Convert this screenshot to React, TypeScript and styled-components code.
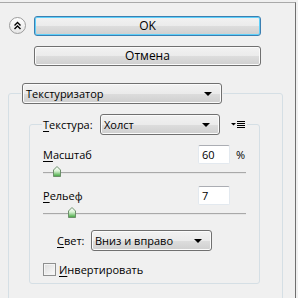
import React from 'react';
import styled, { createGlobalStyle } from 'styled-components';

const Global = createGlobalStyle`
  html, body { margin: 0; padding: 0; background: #f0f0f0; }
  body { font-family: "Open Sans", "Noto Sans", sans-serif; font-size: 11px; color: #000; }
  #root { width: 298px; height: 298px; overflow: hidden; }
`;

const Frame = styled.div`
  box-sizing: border-box;
  width: 296px;
  height: 310px;
  margin-top: 2px;
  border-top: 1px solid #a9a9a9;
  border-right: 1px solid #6f6f6f;
  padding-top: 13px;
`;

const TopRow = styled.div`
  display: flex;
  align-items: flex-start;
  gap: 8px;
  padding-left: 9px;
`;

const Collapse = styled.div`
  box-sizing: border-box;
  width: 17px;
  height: 17px;
  margin-top: 1px;
  border-radius: 50%;
  border: 1px solid #9c9c9c;
  background: linear-gradient(#ffffff, #e6e6e6);
  display: flex;
  align-items: center;
  justify-content: center;
`;

const ButtonStack = styled.div`
  display: flex;
  flex-direction: column;
  gap: 10px;
  width: 227px;
`;

const Button = styled.div<{ $default?: boolean }>`
  box-sizing: border-box;
  height: 20px;
  border-radius: 3px;
  border: 1px solid ${p => (p.$default ? '#3c7fb1' : '#707070')};
  box-shadow: ${p => (p.$default ? 'inset 0 0 0 1px #5fd0fa' : 'inset 0 0 0 1px #fbfbfb')};
  background: linear-gradient(#f2f2f2 0%, #ebebeb 50%, #dddddd 51%, #cfcfcf 100%);
  display: flex;
  align-items: center;
  justify-content: center;
  font-size: 12px;
  line-height: 1;
`;

const Group = styled.fieldset<{ $pl: number }>`
  box-sizing: border-box;
  margin: 0;
  border: 1px solid #d5dfe5;
  border-radius: 3px;
  padding: 0 0 0 ${p => p.$pl}px;
  min-width: 0;
`;

const OuterGroup = styled(Group)`
  width: 275px;
  margin: 17px 0 0 8px;
  height: 260px;
`;

const InnerGroup = styled(Group)`
  width: 231px;
  margin: 10px 0 0 8px;
  padding-bottom: 7px;
`;

const Legend = styled.legend`
  padding: 0 1px;
  display: flex;
  align-items: center;
`;

const Select = styled.div<{ $w: number }>`
  box-sizing: border-box;
  width: ${p => p.$w}px;
  height: 21px;
  border: 1px solid #707070;
  border-radius: 3px;
  box-shadow: inset 0 0 0 1px #fbfbfb;
  background: linear-gradient(#f2f2f2 0%, #ebebeb 50%, #dddddd 51%, #cfcfcf 100%);
  display: flex;
  align-items: center;
  justify-content: space-between;
  padding: 0 9px 0 3px;
`;

const Caret = styled.span`
  width: 0;
  height: 0;
  border-left: 4px solid transparent;
  border-right: 4px solid transparent;
  border-top: 4px solid #000;
`;

const Mn = styled.span`
  text-decoration: underline;
  text-underline-offset: 2px;
`;

const FieldLabel = styled.span<{ $w: number }>`
  width: ${p => p.$w}px;
  flex: none;
`;

const MenuIcon = styled.svg`
  margin: 0 1px 0 11px;
  display: block;
`;

const Body = styled.div`
  padding-left: 1px;
  width: 203px;
`;

const ValueRow = styled.div<{ $mt: number }>`
  display: flex;
  align-items: center;
  height: 19px;
  margin-top: ${p => p.$mt}px;
`;

const RowLabel = styled.span`
  flex: 1;
`;

const Input = styled.div`
  box-sizing: border-box;
  width: 32px;
  height: 19px;
  background: #fff;
  border: 1px solid #e3e9ef;
  border-top-color: #abadb3;
  border-radius: 2px;
  padding-left: 3px;
  display: flex;
  align-items: center;
`;

const Suffix = styled.span`
  width: 16px;
  padding-left: 6px;
  box-sizing: border-box;
`;

const Slider = styled.div`
  position: relative;
  height: 11px;
  margin-top: 2px;
`;

const Track = styled.div`
  position: absolute;
  left: 0;
  right: 0;
  top: 6px;
  height: 1px;
  background: #a9a9a9;
  border-bottom: 1px solid #e6e6e6;
`;

const Thumb = styled.svg`
  position: absolute;
  top: 0;
`;

const LightRow = styled.div`
  display: flex;
  align-items: center;
  margin: 12px 0 0 14px;
`;

const CheckRow = styled.div`
  display: flex;
  align-items: center;
  gap: 3px;
  margin-top: 12px;
  height: 13px;
`;

const Check = styled.div`
  box-sizing: border-box;
  width: 13px;
  height: 13px;
  border: 1px solid #8e8f8f;
  background: linear-gradient(135deg, #dcdcdc, #fbfbfb);
  box-shadow: inset 0 0 0 1px #f4f4f4;
`;

const SliderThumb = ({ x }: { x: number }) => (
  <Thumb width="8" height="11" viewBox="0 0 8 11" style={{ left: x }}>
    <defs>
      <linearGradient id="tg" x1="0" y1="0" x2="0" y2="1">
        <stop offset="0" stopColor="#ffffff" />
        <stop offset="0.45" stopColor="#d9f2d4" />
        <stop offset="1" stopColor="#3da53a" />
      </linearGradient>
    </defs>
    <path d="M4 0.5 L7.5 4 L7.5 10.5 L0.5 10.5 L0.5 4 Z" fill="url(#tg)" stroke="#6d8f6b" strokeWidth="1" />
  </Thumb>
);

export default function App() {
  return (
    <>
      <Global />
      <Frame>
        <TopRow>
          <Collapse>
            <svg width="9" height="9" viewBox="0 0 9 9">
              <path d="M1.5 4.5 L4.5 1.5 L7.5 4.5 M1.5 8 L4.5 5 L7.5 8" fill="none" stroke="#000" strokeWidth="1.4" />
            </svg>
          </Collapse>
          <ButtonStack>
            <Button $default>OK</Button>
            <Button>Отмена</Button>
          </ButtonStack>
        </TopRow>
        <OuterGroup $pl={12}>
          <Legend>
            <Select $w={200}>
              <span>Текстуризатор</span>
              <Caret />
            </Select>
          </Legend>
          <InnerGroup $pl={12}>
            <Legend>
              <FieldLabel $w={57}><Mn>Т</Mn>екстура:</FieldLabel>
              <Select $w={120}>
                <span>Холст</span>
                <Caret />
              </Select>
              <MenuIcon width="14" height="7" viewBox="0 0 14 7">
                <path d="M0 2 H5 L2.5 4.5 Z" fill="#000" />
                <path d="M6 0.5 H14 M6 2.5 H14 M6 4.5 H14 M6 6.5 H14" stroke="#000" strokeWidth="1" />
              </MenuIcon>
            </Legend>
            <Body>
              <ValueRow $mt={10}>
                <RowLabel><Mn>М</Mn>асштаб</RowLabel>
                <Input>60</Input>
                <Suffix>%</Suffix>
              </ValueRow>
              <Slider>
                <Track />
                <SliderThumb x={10} />
              </Slider>
              <ValueRow $mt={9}>
                <RowLabel><Mn>Р</Mn>ельеф</RowLabel>
                <Input>7</Input>
                <Suffix />
              </ValueRow>
              <Slider>
                <Track />
                <SliderThumb x={25} />
              </Slider>
              <LightRow>
                <FieldLabel $w={34}><Mn>С</Mn>вет:</FieldLabel>
                <Select $w={121}>
                  <span>Вниз и вправо</span>
                  <Caret />
                </Select>
              </LightRow>
              <CheckRow>
                <Check />
                <span><Mn>И</Mn>нвертировать</span>
              </CheckRow>
            </Body>
          </InnerGroup>
        </OuterGroup>
      </Frame>
    </>
  );
}
